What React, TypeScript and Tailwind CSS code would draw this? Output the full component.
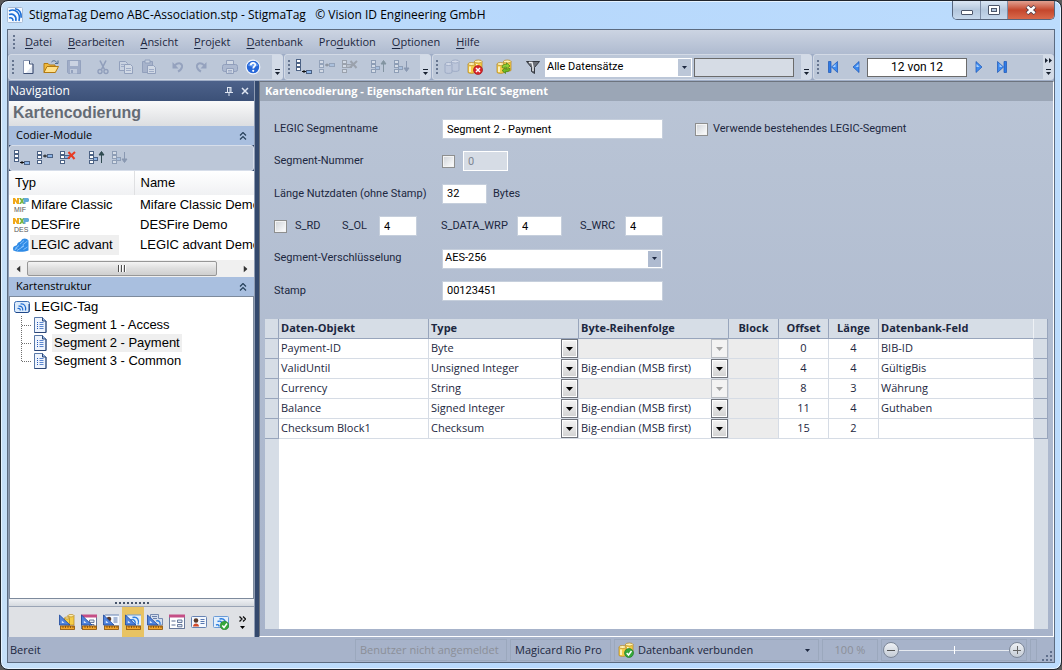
import { useState } from 'react';
import type { ReactNode } from 'react';
import { clsx } from 'clsx';

interface IconProps {
  className?: string;
}

const Icon = ({ className, children }: IconProps & { children: ReactNode }) => (
  <svg viewBox="0 0 16 16" className={clsx('h-4 w-4 shrink-0', className)} aria-hidden="true">
    {children}
  </svg>
);

/* ---------- icons ---------- */

const LogoIcon = () => (
  <Icon>
    <rect x=".5" y=".5" width="15" height="15" rx="1" fill="#f4f9ff" stroke="#a9bcd4" />
    <g fill="none" stroke="#1d6fd6" strokeWidth="1.6">
      <path d="M2 4c6-3 12 2 10 10" />
      <path d="M2 7.500c4-1.500 8 1.500 6.800 6.500" />
      <path d="M2 11c2.500-.8 4.500.8 3.800 3" />
      <path d="M8 1.800c4 .6 6.500 4 6.200 9" />
    </g>
  </Icon>
);

const NewIcon = () => (
  <Icon>
    <path d="M3.500 1.500h6l3.500 3.500v9.500H3.500z" fill="#fff" stroke="#8794b0" />
    <path d="M13 5v9.500H3.500" fill="none" stroke="#3f5075" />
    <path d="M9.500 1.500V5H13" fill="#dfe7f3" stroke="#3f5075" />
    <path d="M12 7v7H6z" fill="#dde4f0" />
  </Icon>
);

const OpenIcon = () => (
  <Icon>
    <path d="M1 13.500V4.500h4l1.500 1.500H12v7.500z" fill="#f0b93c" stroke="#b27a12" />
    <path d="M1 13.500l3-6h11.500l-3.200 6z" fill="#ffe08a" stroke="#b27a12" />
    <path d="M8.500 3c2-2 4-1.500 5 .5M15 1.500v3h-3" fill="none" stroke="#4a6c92" />
  </Icon>
);

const SaveIcon = () => (
  <Icon className="opacity-60">
    <path d="M1.500 1.500h13v13h-12l-1-1z" fill="#8c9bbd" stroke="#7a8aae" />
    <path d="M4 2h8v5H4z" fill="#d5dcea" />
    <path d="M4 10h7v4.500H4z" fill="#c3cde0" />
    <path d="M5 11h2v3H5z" fill="#7a8aae" />
  </Icon>
);

const CutIcon = () => (
  <Icon className="opacity-60">
    <path d="M5 1.500l4.500 9M11 1.500l-4.500 9" stroke="#7383a8" strokeWidth="1.600" />
    <circle cx="5" cy="12.500" r="2" fill="none" stroke="#7383a8" strokeWidth="1.400" />
    <circle cx="11" cy="12.500" r="2" fill="none" stroke="#7383a8" strokeWidth="1.400" />
  </Icon>
);

const CopyIcon = () => (
  <Icon className="opacity-60">
    <path d="M1.500 2.500h6l2 2v7h-8z" fill="#d3dae8" stroke="#7787ab" />
    <path d="M6.500 5.500h6l2 2v7h-8z" fill="#dfe5ef" stroke="#7787ab" />
    <path d="M8 9.500h5M8 11.500h5M3 5.500h3M3 7.500h3" stroke="#8c9bbd" />
  </Icon>
);

const PasteIcon = () => (
  <Icon className="opacity-60">
    <path d="M1.500 2.500h10v11h-10z" fill="#9aa7c4" stroke="#7787ab" />
    <path d="M4 1h5v3H4z" fill="#d3dae8" stroke="#7787ab" />
    <path d="M6.500 6.500h6l2 2v6h-8z" fill="#dfe5ef" stroke="#7787ab" />
    <path d="M8 10.500h5M8 12.500h5" stroke="#8c9bbd" />
  </Icon>
);

const UndoIcon = ({ className }: IconProps) => (
  <Icon className={clsx('opacity-60', className)}>
    <path d="M4.500 6.500c4.500-4 8-2 7.500 1.500-.4 2-2 3.500-4 4.500" fill="none" stroke="#7c8bae" strokeWidth="2" />
    <path d="M2.500 3v6.500h6z" fill="#7c8bae" />
  </Icon>
);

const PrintIcon = () => (
  <Icon className="opacity-60">
    <path d="M4.500 5.500v-4h7v4" fill="#dfe5ef" stroke="#7787ab" />
    <rect x=".5" y="5.500" width="15" height="7" rx="2" fill="#a4b0cb" stroke="#7383a8" />
    <path d="M4.500 9.500h7v5h-7z" fill="#dfe5ef" stroke="#7787ab" />
    <path d="M6 11.500h4M6 13h4" stroke="#8c9bbd" />
  </Icon>
);

const HelpIcon = () => (
  <Icon>
    <circle cx="8" cy="8" r="6.800" fill="#2767d8" stroke="#f1f6ff" strokeWidth="1.200" />
    <path d="M3 6.500c1-4 9-4 10 0-2 1.500-8 1.500-10 0z" fill="#6a9ff0" />
    <path d="M5.800 6.300c0-3.200 4.600-3 4.400-.3-.1 1.500-2 1.600-2 3.400" fill="none" stroke="#fff" strokeWidth="1.700" />
    <circle cx="8.200" cy="11.800" r="1.100" fill="#fff" />
  </Icon>
);

const Rows = () => (
  <g fill="#fff" stroke="#4c6284">
    <rect x=".5" y="1.500" width="4" height="3" />
    <rect x=".5" y="5.500" width="4" height="3" />
    <rect x=".5" y="10.500" width="4" height="3" />
  </g>
);

const AppendIcon = ({ className }: IconProps) => (
  <Icon className={className}>
    <g fill="#fff" stroke="#4c6284">
      <rect x=".5" y=".5" width="4" height="3" />
      <rect x=".5" y="4.500" width="4" height="3" />
      <rect x=".5" y="8.500" width="4" height="3" />
      <rect x="10.500" y="11.500" width="5" height="3" fill="#8cb4e6" />
    </g>
    <path d="M6 12.500h4M8 11v3" stroke="#111" />
  </Icon>
);

const InsertIcon = ({ className }: IconProps) => (
  <Icon className={className}>
    <Rows />
    <rect x="10.500" y="4.500" width="5" height="3" fill="#8cb4e6" stroke="#4c6284" />
    <path d="M6 6h4M8 4.500v3" stroke="#111" />
  </Icon>
);

const RemoveIcon = ({ className }: IconProps) => (
  <Icon className={className}>
    <Rows />
    <rect x="4.500" y="5.500" width="5" height="3" fill="#8cb4e6" stroke="#4c6284" />
    <path d="M8.500 2l6 7M15 2L8 8.500" stroke="#e83c24" strokeWidth="2" />
  </Icon>
);

const MoveIcon = ({ down, className }: IconProps & { down?: boolean }) => (
  <Icon className={className}>
    <Rows />
    <rect x="4.500" y="7.500" width="4" height="3" fill="#8cb4e6" stroke="#4c6284" />
    {down ? (
      <path d="M12.500 2v9M10 9h5l-2.500 3.500z" fill="#3e5478" stroke="#3e5478" />
    ) : (
      <path d="M12.500 13V4M10 5h5l-2.500-3.500z" fill="#2f4a50" stroke="#2f4a50" />
    )}
  </Icon>
);

const Cylinders = () => (
  <g fill="#f4cc48" stroke="#b5851c" strokeWidth=".7">
    <path d="M7.500 2.500v9c1.500 1.200 6 1.200 7.500 0v-9z" />
    <ellipse cx="11.250" cy="2.500" rx="3.750" ry="1.500" fill="#fff3b4" />
    <path d="M1 5v8.500c1.500 1.200 5.500 1.200 7 0V5z" />
    <ellipse cx="4.500" cy="5" rx="3.500" ry="1.500" fill="#fff3b4" />
    <path d="M3 7.500v5.500M9.800 5v6" stroke="#fff9d8" strokeWidth="1.600" />
  </g>
);

const DatabaseIcon = () => (
  <Icon>
    <g fill="#bcc6da" stroke="#97a4c0" strokeWidth=".8">
      <path d="M7.500 2.500v9c1.500 1.200 6 1.200 7.500 0v-9z" />
      <ellipse cx="11.250" cy="2.500" rx="3.750" ry="1.500" fill="#d3dae8" />
      <path d="M1 5v8.500c1.500 1.200 5.500 1.200 7 0V5z" />
      <ellipse cx="4.500" cy="5" rx="3.500" ry="1.500" fill="#d3dae8" />
    </g>
  </Icon>
);

const DatabaseErrorIcon = () => (
  <Icon>
    <Cylinders />
    <circle cx="11" cy="11" r="4.500" fill="#d8262b" stroke="#9c1114" strokeWidth=".6" />
    <path d="M9 9l4 4M13 9l-4 4" stroke="#fff" strokeWidth="1.500" />
  </Icon>
);

const DatabaseRefreshIcon = () => (
  <Icon>
    <Cylinders />
    <path d="M6 8.500C6 6 8 5 10.500 5.500V3.800L14 7l-3.500 3V8.200C9 8 8 8.300 7.500 9z" fill="#8fd136" stroke="#437d10" strokeWidth=".7" />
    <path d="M14 9.500c0 2.500-2 3.500-4.500 3.200v1.800L6 11.500 9.500 8.700v1.600c1.500.2 2.500-.1 3-.8z" fill="#6fba22" stroke="#437d10" strokeWidth=".7" />
  </Icon>
);

const DatabaseOkIcon = () => (
  <Icon>
    <Cylinders />
    <circle cx="11" cy="11" r="4.500" fill="#35a83a" stroke="#1c7522" strokeWidth=".6" />
    <path d="M8.700 11l1.800 2 3-4" fill="none" stroke="#fff" strokeWidth="1.500" />
  </Icon>
);

const FilterIcon = () => (
  <Icon>
    <path d="M1.500 2.500h13L9.500 8.500v6l-3-2v-4z" fill="#6c7078" stroke="#34383f" />
    <path d="M4 3.500h3l1 4.500v4" fill="none" stroke="#eef0f3" strokeWidth="1.400" />
  </Icon>
);

const SkipIcon = ({ bar, className }: IconProps & { bar?: boolean }) => (
  <Icon className={className}>
    {bar && <path d="M3.500 2.500H6v11H3.500z" fill="#2f7be6" stroke="#1b55b5" strokeWidth=".7" />}
    <path
      d={bar ? 'M12.500 2.500v11L6.500 8z' : 'M11 2.500v11L5 8z'}
      fill="#3f8cf0"
      stroke="#1b55b5"
      strokeWidth=".7"
    />
    <path d="M10.500 5v3H7.500z" fill="#a8d0ff" />
  </Icon>
);

const NxpIcon = ({ dark }: { dark?: boolean }) => (
  <svg viewBox="0 0 16 16" className="h-4 w-4 shrink-0" aria-hidden="true">
    <path d="M0 7V1h2l2 3V1h2v6H4L2 4v3z" fill="#f0a818" />
    <path d="M6 1h2l1 1.500L10 1h2l-2 3 2 3h-2L9 5.500 8 7H6l2-3z" fill="#7bb53c" />
    <path d="M10.500 5V1H14c3 0 3 4 0 4h-1.500v2h-2V5z" fill="#61a9d8" />
    <text x="1" y="15" fontSize="7" fontFamily="Liberation Sans, sans-serif" fill="#555">
      {dark ? 'DES' : 'MIF'}
    </text>
  </svg>
);

const LegicIcon = () => (
  <Icon>
    <path
      d="M0 11c1-2.500 3-2 4-3 .5-3 3-3 4-4 1.500-3.500 6-3 7.500-.5v10c-4 1.800-12 1.800-15.200 0z"
      fill="#2f8be6"
    />
    <path
      d="M2 11.500l4-3M4 13.500l7-4.500M7 7l4-3.500M9.500 8l5-4M10.500 12.500l4-2.500M1.500 13l3-2M8 10.500l3-2"
      stroke="#8cc6ff"
      strokeWidth=".9"
    />
  </Icon>
);

const TagIcon = () => (
  <Icon>
    <rect x=".5" y="2.500" width="15" height="11" rx="2" fill="#dcebfb" stroke="#3d6fb4" />
    <path d="M15 5v7c0 1-1 1.500-2 1.500H2" fill="none" stroke="#1f4788" />
    <g fill="none" stroke="#1e6ad0" strokeWidth="1.200">
      <path d="M3.500 9.500c2-.5 3 .5 2.700 2" />
      <path d="M4.500 7.200c3-.7 4.700 1.500 4.200 4.300" />
      <path d="M6.500 5c4-.6 5.700 2.500 5 6.500" />
    </g>
  </Icon>
);

const PageIcon = () => (
  <Icon>
    <path d="M2.500.5h8l3.500 3.500v11.500H2.500z" fill="#eef4fd" stroke="#5878a8" />
    <path d="M14 4v11.500H2.500" fill="none" stroke="#2b4677" />
    <path d="M10.500.5V4H14" fill="#9dbbe6" stroke="#2b4677" />
    <path d="M5 5.500h1M5 7.500h1M5 9.500h1M5 11.500h1" stroke="#2457b8" />
    <path d="M7.500 5.500h4M7.500 7.500h4M7.500 9.500h4M7.500 11.500h4" stroke="#5b86cf" />
  </Icon>
);

const SetSquare = () => (
  <>
    <path d="M.5 1v10h10.500z" fill="#4f83dc" stroke="#1d479c" strokeWidth=".8" />
    <path d="M2.800 6.500v2.500h2.600z" fill="#dce8fa" />
    <rect x="1.500" y="12" width="14" height="3.500" fill="#f3a52a" stroke="#8a5208" strokeWidth=".8" />
    <path d="M4 12v2M6.500 12v2M9 12v2M11.500 12v2M14 12v2" stroke="#6b3e05" strokeWidth=".7" />
  </>
);

const MiniForm = () => (
  <>
    <rect x=".5" y="1.500" width="15" height="13" fill="#fff" stroke="#5a6d92" strokeWidth=".9" />
    <path d="M0 .5h16v3H0z" fill="#c54f86" />
    <path d="M2.500 7h4M2.500 11h4" stroke="#5a6d92" />
    <path d="M8.500 6h4.500v2.500H8.500zM8.500 10.500h4.500v2.300H8.500z" fill="#dfe7f3" stroke="#5a6d92" strokeWidth=".9" />
  </>
);

const MiniCard = () => (
  <>
    <rect x=".5" y="2.500" width="15" height="11" rx="1" fill="#f4f8fe" stroke="#6783b3" />
    <circle cx="5" cy="6.500" r="2.300" fill="#5a3a2a" />
    <path d="M2 12.500c0-4 6-4 6 0z" fill="#d24a2a" />
    <path d="M9.500 5.500h4M9.500 7.500h4M9.500 9.500h4" stroke="#5878b0" />
  </>
);

const MiniTag = () => (
  <>
    <rect x=".5" y="2.500" width="15" height="11" rx="1" fill="#e3effc" stroke="#6b9bd6" />
    <path d="M3 11c2-1 3 0 3 1.500M4.500 7.500c4-1.500 5.500 2 4.500 4.500M6.500 5c5-1.500 7 3 5.500 7" fill="none" stroke="#2a7de0" strokeWidth="1.400" />
  </>
);

const designIcons: { label: string; icon: ReactNode }[] = [
  {
    label: 'Datenbankdesign',
    icon: (
      <Icon>
        <g fill="#f4cc48" stroke="#b5851c" strokeWidth=".7">
          <path d="M9 1.500V11h6V1.500z" />
          <ellipse cx="12" cy="1.700" rx="3" ry="1.200" fill="#fff3b4" />
          <path d="M5.500 4v7h5V4z" />
          <ellipse cx="8" cy="4" rx="2.500" ry="1" fill="#fff3b4" />
        </g>
        <SetSquare />
      </Icon>
    ),
  },
  {
    label: 'Formulardesign',
    icon: (
      <Icon>
        <MiniForm />
        <SetSquare />
      </Icon>
    ),
  },
  {
    label: 'Kartendesign',
    icon: (
      <Icon>
        <g transform="translate(1 -1.500)">
          <MiniCard />
        </g>
        <SetSquare />
      </Icon>
    ),
  },
  {
    label: 'Kartencodierung',
    icon: (
      <Icon>
        <g transform="translate(1 -1.500)">
          <MiniTag />
        </g>
        <SetSquare />
      </Icon>
    ),
  },
  {
    label: 'Druckdesign',
    icon: (
      <Icon>
        <path d="M3.500.5h8v4h4V11h-12z" fill="#d5deee" stroke="#6b80a8" strokeWidth=".9" />
        <path d="M5 2.500h5M6 4.500h4" stroke="#6b80a8" />
        <path d="M9 7c3-1 4.500 1 4 3.500" fill="none" stroke="#2a7de0" strokeWidth="1.300" />
        <SetSquare />
      </Icon>
    ),
  },
  {
    label: 'Formular',
    icon: (
      <Icon>
        <MiniForm />
      </Icon>
    ),
  },
  {
    label: 'Karte',
    icon: (
      <Icon>
        <MiniCard />
      </Icon>
    ),
  },
  {
    label: 'Codieren',
    icon: (
      <Icon>
        <MiniTag />
        <circle cx="11.500" cy="11.500" r="4.300" fill="#35a83a" stroke="#1c7522" strokeWidth=".6" />
        <path d="M9.300 11.500l1.700 2 3-4" fill="none" stroke="#fff" strokeWidth="1.500" />
      </Icon>
    ),
  },
];

const CaretDown = ({ className = 'h-1 w-[7px]' }: IconProps) => (
  <svg viewBox="0 0 7 4" className={className} aria-hidden="true">
    <path d="M0 0h7L3.500 4z" fill="currentColor" />
  </svg>
);

const DoubleChevronUp = () => (
  <svg viewBox="0 0 8 8" className="h-2 w-2" aria-hidden="true">
    <path d="M1 3.500l3-3 3 3M1 7.500l3-3 3 3" fill="none" stroke="#26405a" strokeWidth="1.200" />
  </svg>
);

/* ---------- shared controls ---------- */

const Grip = () => (
  <span className="flex w-[7px] shrink-0 flex-col items-center gap-[2px]">
    {[0, 1, 2, 3].map((dot) => (
      <span key={dot} className="h-[2px] w-[2px] bg-[#66758f]" />
    ))}
  </span>
);

const Separator = () => <span className="w-[6px] shrink-0" />;

interface ToolButtonProps {
  label: string;
  disabled?: boolean;
  children: ReactNode;
}

const ToolButton = ({ label, disabled, children }: ToolButtonProps) => (
  <button
    type="button"
    aria-label={label}
    disabled={disabled}
    className="flex h-[22px] w-[23px] shrink-0 items-center justify-center"
  >
    {children}
  </button>
);

interface StripProps {
  className?: string;
  more?: boolean;
  children: ReactNode;
}

const Strip = ({ className, more, children }: StripProps) => (
  <div
    className={clsx(
      'flex h-[26px] items-center rounded-[3px] border border-[#d3dae6] bg-[#bcc7d8]',
      className
    )}
  >
    <Grip />
    {children}
    <button
      type="button"
      aria-label="Weitere Schaltflächen"
      className="ml-auto flex h-full w-[10px] shrink-0 flex-col items-center justify-end gap-[2px] bg-[#d3dbe7] pb-1 text-[#17202f]"
    >
      {more && (
        <svg viewBox="0 0 7 5" className="mb-1 h-[5px] w-[7px]" aria-hidden="true">
          <path d="M0 0l3 2.500L0 5zM4 0l3 2.500L4 5z" fill="currentColor" />
        </svg>
      )}
      <span className="h-px w-[5px] bg-[#17202f]" />
      <CaretDown className="h-[3px] w-[5px]" />
    </button>
  </div>
);

const fieldClass =
  'h-5 border border-[#c6cfdc] bg-white px-1 text-[11px] leading-4 text-black outline-none';

const checkClass =
  'h-[13px] w-[13px] shrink-0 appearance-none border border-[#8e8f8f] bg-gradient-to-br from-[#cfd3d8] to-white shadow-[inset_0_0_0_1px_#f4f4f4] checked:bg-[#3f6fb5]';

/* ---------- title, menu, toolbars ---------- */

const TitleBar = () => (
  <header className="flex h-7 shrink-0 items-center gap-[6px] text-xs text-black">
    <LogoIcon />
    <h1 className="whitespace-pre">StigmaTag Demo ABC-Association.stp - StigmaTag   © Vision ID Engineering GmbH</h1>
    <div className="ml-auto flex h-[19px] self-start overflow-hidden rounded-b-[5px] border border-t-0 border-[#56657c]">
      <button
        type="button"
        aria-label="Minimieren"
        className="flex w-7 items-center justify-center border-r border-[#7d8da6] bg-gradient-to-b from-[#dbe7f4] via-[#b4c7dd] to-[#c6d8ec]"
      >
        <span className="mt-1 h-[5px] w-3 rounded-[1px] border border-[#4c566a] bg-white" />
      </button>
      <button
        type="button"
        aria-label="Maximieren"
        className="flex w-[27px] items-center justify-center border-r border-[#7d8da6] bg-gradient-to-b from-[#dbe7f4] via-[#b4c7dd] to-[#c6d8ec]"
      >
        <span className="flex h-[10px] w-3 items-center justify-center rounded-[1px] border border-[#4c566a] bg-white">
          <span className="h-1 w-[6px] border border-[#4c566a] bg-[#b4c7dd]" />
        </span>
      </button>
      <button
        type="button"
        aria-label="Schließen"
        className="flex w-[46px] items-center justify-center bg-gradient-to-b from-[#e0a091] via-[#c4462c] to-[#d9694b]"
      >
        <svg viewBox="0 0 12 10" className="h-[10px] w-3" aria-hidden="true">
          <path d="M2 1.500l8 7M10 1.500l-8 7" stroke="#4c3a46" strokeWidth="4.200" />
          <path d="M2.300 1.800l7.400 6.400M9.700 1.800L2.300 8.200" stroke="#fff" strokeWidth="2.500" />
        </svg>
      </button>
    </div>
  </header>
);

const menuItems = [
  ['', 'D', 'atei'],
  ['', 'B', 'earbeiten'],
  ['', 'A', 'nsicht'],
  ['', 'P', 'rojekt'],
  ['', 'D', 'atenbank'],
  ['Pro', 'd', 'uktion'],
  ['', 'O', 'ptionen'],
  ['', 'H', 'ilfe'],
];

const MenuBar = () => (
  <nav className="flex h-6 shrink-0 items-center bg-gradient-to-b from-[#ccd4e2] to-[#afbbd0] pl-[2px]">
    <Grip />
    {menuItems.map(([before, key, after]) => (
      <button key={before + key + after} type="button" className="px-2 text-[11px]">
        {before}
        <u className="underline-offset-2">{key}</u>
        {after}
      </button>
    ))}
  </nav>
);

const Toolbars = () => (
  <div className="flex h-[27px] shrink-0 gap-px bg-[#9fadc6]">
    <Strip className="w-[275px]">
      <ToolButton label="Neu"><NewIcon /></ToolButton>
      <ToolButton label="Öffnen"><OpenIcon /></ToolButton>
      <ToolButton label="Speichern" disabled><SaveIcon /></ToolButton>
      <Separator />
      <ToolButton label="Ausschneiden" disabled><CutIcon /></ToolButton>
      <ToolButton label="Kopieren" disabled><CopyIcon /></ToolButton>
      <ToolButton label="Einfügen" disabled><PasteIcon /></ToolButton>
      <Separator />
      <ToolButton label="Rückgängig" disabled><UndoIcon /></ToolButton>
      <ToolButton label="Wiederholen" disabled><UndoIcon className="-scale-x-100" /></ToolButton>
      <Separator />
      <ToolButton label="Drucken" disabled><PrintIcon /></ToolButton>
      <ToolButton label="Hilfe"><HelpIcon /></ToolButton>
    </Strip>
    <Strip className="w-[147px]">
      <ToolButton label="Anhängen"><AppendIcon /></ToolButton>
      <ToolButton label="Einfügen" disabled><InsertIcon className="opacity-35" /></ToolButton>
      <ToolButton label="Entfernen" disabled><RemoveIcon className="opacity-35 grayscale" /></ToolButton>
      <Separator />
      <ToolButton label="Nach oben" disabled><MoveIcon className="opacity-40" /></ToolButton>
      <ToolButton label="Nach unten" disabled><MoveIcon down className="opacity-40" /></ToolButton>
    </Strip>
    <Strip className="w-[380px]">
      <ToolButton label="Datenbank" disabled><DatabaseIcon /></ToolButton>
      <ToolButton label="Datenbank trennen"><DatabaseErrorIcon /></ToolButton>
      <Separator />
      <ToolButton label="Aktualisieren"><DatabaseRefreshIcon /></ToolButton>
      <Separator />
      <ToolButton label="Filter"><FilterIcon /></ToolButton>
      <div className="relative mr-[2px] ml-px h-[19px] w-[147px] shrink-0">
        <select
          aria-label="Datensätze"
          className="block h-full w-full appearance-none bg-white pl-[2px] font-[Roboto,sans-serif] text-[11px] text-black outline-none"
        >
          <option>Alle Datensätze</option>
        </select>
        <span className="pointer-events-none absolute inset-y-px right-px flex w-[13px] items-center justify-center bg-[#bcc7d8]">
          <CaretDown className="h-[3px] w-[5px]" />
        </span>
      </div>
      <input
        aria-label="Filterwert"
        disabled
        className="h-[19px] w-[100px] border border-[#6b6b6b] bg-[#d6dce5]"
      />
    </Strip>
    <Strip className="flex-1" more>
      <ToolButton label="Erster"><SkipIcon bar /></ToolButton>
      <ToolButton label="Vorheriger"><SkipIcon /></ToolButton>
      <input
        aria-label="Datensatz"
        defaultValue="12 von 12"
        className="h-[19px] w-[100px] border border-[#6b6b6b] bg-white text-center font-[Roboto,sans-serif] text-xs text-black outline-none"
      />
      <ToolButton label="Nächster"><SkipIcon className="-scale-x-100" /></ToolButton>
      <ToolButton label="Letzter"><SkipIcon bar className="-scale-x-100" /></ToolButton>
    </Strip>
  </div>
);

/* ---------- navigation ---------- */

const modules = [
  { type: 'Mifare Classic', name: 'Mifare Classic Demo', icon: <NxpIcon /> },
  { type: 'DESFire', name: 'DESFire Demo', icon: <NxpIcon dark /> },
  { type: 'LEGIC advant', name: 'LEGIC advant Demo', icon: <LegicIcon /> },
];

const segments = ['Segment 1 - Access', 'Segment 2 - Payment', 'Segment 3 - Common'];

const SectionHeader = ({ title }: { title: string }) => (
  <button
    type="button"
    className="flex h-[19px] w-full shrink-0 items-center justify-between bg-[#a9bfdf] px-[7px] text-[11px] text-black"
  >
    {title}
    <DoubleChevronUp />
  </button>
);

const ModuleList = () => (
  <div className="h-[89px] shrink-0 overflow-hidden bg-white">
    <table className="w-[300px] table-fixed border-collapse text-left font-['Liberation_Sans',sans-serif] text-[13px] leading-5 text-black">
      <thead>
        <tr className="h-6 bg-gradient-to-b from-white to-[#f0f1f3]">
          <th className="w-[125px] border-r border-[#dfe0e2] pl-[6px] font-normal">Typ</th>
          <th className="pl-[6px] font-normal">Name</th>
        </tr>
      </thead>
      <tbody>
        {modules.map((module, index) => (
          <tr key={module.type} className="h-5">
            <td className="p-0 pl-1">
              <span className="flex items-center gap-px">
                {module.icon}
                <span className={clsx('pr-[6px] pl-px', index === 2 && 'bg-[#efefef]')}>
                  {module.type}
                </span>
              </span>
            </td>
            <td className="p-0 pl-[6px] whitespace-nowrap">{module.name}</td>
          </tr>
        ))}
      </tbody>
    </table>
  </div>
);

const ScrollBar = () => (
  <div className="flex h-[17px] shrink-0 items-center bg-[#f0f0f0] text-[#333]">
    <button type="button" aria-label="Nach links" className="flex w-[18px] justify-center">
      <CaretDown className="h-1 w-[7px] rotate-90" />
    </button>
    <div className="flex flex-1">
      <div className="flex h-[15px] w-[91%] items-center justify-center gap-px rounded-[2px] border border-[#979797] bg-gradient-to-b from-[#f4f4f4] via-[#dedede] to-[#cfcfcf]">
        {[0, 1, 2].map((line) => (
          <span key={line} className="h-[7px] w-[2px] border-r border-white bg-[#4f4f4f]" />
        ))}
      </div>
    </div>
    <button type="button" aria-label="Nach rechts" className="flex w-[18px] justify-center">
      <CaretDown className="h-1 w-[7px] -rotate-90" />
    </button>
  </div>
);

const SegmentTree = () => {
  const [selected, setSelected] = useState(segments[1]);

  return (
    <div className="min-h-0 flex-1 border border-[#7d8a9c] bg-white pt-px pl-1 font-['Liberation_Sans',sans-serif] text-[13px] leading-[18px] text-black">
      <p className="flex items-center gap-1">
        <TagIcon />
        LEGIC-Tag
      </p>
      <ul className="pl-[7px]">
        {segments.map((segment, index) => (
          <li key={segment} className="flex items-center">
            <svg viewBox="0 0 11 18" className="h-[18px] w-[11px]" aria-hidden="true">
              <path
                d={index === segments.length - 1 ? 'M.5 0v9.500H11' : 'M.5 0v18M1 9.500h10'}
                fill="none"
                stroke="#6f6f6f"
                strokeDasharray="1 1"
              />
            </svg>
            <PageIcon />
            <button
              type="button"
              onClick={() => setSelected(segment)}
              className={clsx('ml-1 px-[2px]', segment === selected && 'bg-[#efefef]')}
            >
              {segment}
            </button>
          </li>
        ))}
      </ul>
    </div>
  );
};

const Navigation = () => (
  <aside className="flex w-[247px] shrink-0 flex-col border-x border-[#8f9cb3]">
    <div className="flex h-5 shrink-0 items-center bg-gradient-to-b from-[#4d628b] to-[#3c5178] px-px text-xs text-white">
      Navigation
      <button type="button" aria-label="Anheften" className="ml-auto">
        <svg viewBox="0 0 8 9" className="h-[9px] w-2" aria-hidden="true">
          <path d="M2.500 0v5M5 0v5M6 0v5M2 .5h4M0 5.500h8M4 6v3" stroke="#dfe6f2" />
        </svg>
      </button>
      <button type="button" aria-label="Navigation schließen" className="mr-1 ml-2">
        <svg viewBox="0 0 8 8" className="h-2 w-2" aria-hidden="true">
          <path d="M1 1l6 6M7 1L1 7" stroke="#dfe6f2" strokeWidth="1.500" />
        </svg>
      </button>
    </div>
    <h2 className="h-[25px] shrink-0 bg-gradient-to-b from-[#fafafa] to-[#dcdee1] pl-1 font-['Liberation_Sans',sans-serif] text-base leading-6 font-bold text-[#656b75]">
      Kartencodierung
    </h2>
    <SectionHeader title="Codier-Module" />
    <div className="flex h-[26px] shrink-0 items-center rounded-[3px] border border-[#d7deea] bg-[#bcc7d8]">
      <ToolButton label="Modul anhängen"><AppendIcon /></ToolButton>
      <ToolButton label="Modul einfügen"><InsertIcon /></ToolButton>
      <ToolButton label="Modul entfernen"><RemoveIcon /></ToolButton>
      <Separator />
      <ToolButton label="Modul nach oben"><MoveIcon /></ToolButton>
      <ToolButton label="Modul nach unten" disabled><MoveIcon down className="opacity-40" /></ToolButton>
    </div>
    <ModuleList />
    <ScrollBar />
    <SectionHeader title="Kartenstruktur" />
    <SegmentTree />
    <div className="flex h-[7px] shrink-0 items-center justify-center gap-[2px] bg-gradient-to-b from-[#f0f2f5] to-[#d5d9df]">
      {[0, 1, 2, 3, 4, 5, 6, 7, 8].map((dot) => (
        <span key={dot} className="h-[2px] w-[2px] bg-[#46546b]" />
      ))}
    </div>
    <div className="flex h-[31px] shrink-0 items-center justify-end border-t border-[#9aa4b5] bg-[#dfe1e5] pr-[2px]">
      {designIcons.map(({ label, icon }) => (
        <button
          key={label}
          type="button"
          aria-label={label}
          className={clsx(
            'flex h-[30px] w-[22px] items-center justify-center',
            label === 'Kartencodierung' && 'bg-[#e8c363]'
          )}
        >
          {icon}
        </button>
      ))}
      <button type="button" aria-label="Mehr" className="flex w-5 flex-col items-center gap-1">
        <svg viewBox="0 0 7 6" className="h-[6px] w-[7px]" aria-hidden="true">
          <path d="M.5 .5L3 3 .5 5.500M4 .5L6.500 3 4 5.500" fill="none" stroke="#111" strokeWidth="1.300" />
        </svg>
        <CaretDown className="h-[3px] w-[5px] text-black" />
      </button>
    </div>
  </aside>
);

/* ---------- segment form ---------- */

const SegmentForm = () => (
  <form className="flex h-[182px] shrink-0 flex-col justify-between font-[Roboto,sans-serif] text-[11px]">
    <div className="flex h-5 items-center">
      <label htmlFor="segment-name" className="w-[168px] shrink-0">LEGIC Segmentname</label>
      <input id="segment-name" defaultValue="Segment 2 - Payment" className={clsx(fieldClass, 'w-[221px]')} />
      <label className="ml-8 flex items-center gap-[5px]">
        <input type="checkbox" className={checkClass} />
        Verwende bestehendes LEGIC-Segment
      </label>
    </div>
    <div className="flex h-5 items-center">
      <label htmlFor="segment-number" className="w-[168px] shrink-0">Segment-Nummer</label>
      <input type="checkbox" aria-label="Segment-Nummer verwenden" className={checkClass} />
      <input
        id="segment-number"
        defaultValue="0"
        disabled
        className="ml-2 h-5 w-[45px] border border-white bg-[#d6dce5] px-1 text-[11px] text-[#7d8592]"
      />
    </div>
    <div className="flex h-5 items-center">
      <label htmlFor="data-length" className="w-[168px] shrink-0">Länge Nutzdaten (ohne Stamp)</label>
      <input id="data-length" defaultValue="32" className={clsx(fieldClass, 'w-[45px]')} />
      <span className="ml-[6px]">Bytes</span>
    </div>
    <div className="flex h-5 items-center">
      <label className="flex w-[68px] items-center gap-2">
        <input type="checkbox" className={checkClass} />
        S_RD
      </label>
      <label htmlFor="s-ol" className="w-[37px]">S_OL</label>
      <input id="s-ol" defaultValue="4" className={clsx(fieldClass, 'w-[38px]')} />
      <label htmlFor="s-data-wrp" className="w-[100px] pl-6">S_DATA_WRP</label>
      <input id="s-data-wrp" defaultValue="4" className={clsx(fieldClass, 'w-[45px]')} />
      <label htmlFor="s-wrc" className="w-[63px] pl-[18px]">S_WRC</label>
      <input id="s-wrc" defaultValue="4" className={clsx(fieldClass, 'w-[38px]')} />
    </div>
    <div className="flex h-5 items-center">
      <label htmlFor="encryption" className="w-[168px] shrink-0">Segment-Verschlüsselung</label>
      <div className="relative w-[221px]">
        <select
          id="encryption"
          className="block h-5 w-full appearance-none border border-[#c6cfdc] bg-white pl-[2px] text-[11px] text-black outline-none"
        >
          <option>AES-256</option>
          <option>DES</option>
        </select>
        <span className="pointer-events-none absolute inset-y-[2px] right-[2px] flex w-[13px] items-center justify-center bg-[#afbbd0]">
          <CaretDown className="h-[3px] w-[5px]" />
        </span>
      </div>
    </div>
    <div className="flex h-5 items-center">
      <label htmlFor="stamp" className="w-[168px] shrink-0">Stamp</label>
      <input id="stamp" defaultValue="00123451" className={clsx(fieldClass, 'w-[221px]')} />
    </div>
  </form>
);

/* ---------- data objects ---------- */

interface DataObject {
  name: string;
  type: string;
  order: string;
  offset: number;
  length: number;
  field: string;
}

const BIG_ENDIAN = 'Big-endian (MSB first)';

const dataObjects: DataObject[] = [
  { name: 'Payment-ID', type: 'Byte', order: '', offset: 0, length: 4, field: 'BIB-ID' },
  { name: 'ValidUntil', type: 'Unsigned Integer', order: BIG_ENDIAN, offset: 4, length: 4, field: 'GültigBis' },
  { name: 'Currency', type: 'String', order: '', offset: 8, length: 3, field: 'Währung' },
  { name: 'Balance', type: 'Signed Integer', order: BIG_ENDIAN, offset: 11, length: 4, field: 'Guthaben' },
  { name: 'Checksum Block1', type: 'Checksum', order: BIG_ENDIAN, offset: 15, length: 2, field: '' },
];

const CellSelect = ({ label, value }: { label: string; value: string }) => (
  <div className="relative h-[19px]">
    <select
      aria-label={label}
      disabled={!value}
      className="block h-full w-full appearance-none bg-transparent pl-[2px] text-[11px] outline-none"
    >
      <option>{value}</option>
    </select>
    <span
      className={clsx(
        'pointer-events-none absolute inset-y-0 right-0 flex w-[17px] items-center justify-center border',
        value
          ? 'border-[#70747c] bg-gradient-to-b from-[#f4f4f4] to-[#d2d2d2] text-black shadow-[inset_0_0_0_1px_#fff]'
          : 'border-[#b9bdc3] bg-[#f3f3f3] text-[#a3a3a3]'
      )}
    >
      <CaretDown />
    </span>
  </div>
);

const headClass = 'border-r border-b border-[#98a5bc] px-[2px] font-bold';
const cellClass = 'border-r border-b border-[#d6dce5] p-0';
const gutterClass = 'border-r border-b border-[#98a5bc] bg-[#d6dde6] p-0';

const DataTable = () => (
  <div className="flex min-h-0 flex-1 flex-col bg-white">
    <table className="w-full table-fixed border-separate border-spacing-0 text-left text-[11px]">
      <thead>
        <tr className="h-5 bg-[#d6dde6]">
          <th className={clsx(headClass, 'w-[14px]')} />
          <th className={clsx(headClass, 'w-[150px]')}>Daten-Objekt</th>
          <th className={clsx(headClass, 'w-[150px]')}>Type</th>
          <th className={clsx(headClass, 'w-[150px]')}>Byte-Reihenfolge</th>
          <th className={clsx(headClass, 'w-[50px] text-center')}>Block</th>
          <th className={clsx(headClass, 'w-[50px] text-center')}>Offset</th>
          <th className={clsx(headClass, 'w-[50px] text-center')}>Länge</th>
          <th className="border-r border-b border-r-[#eef1f5] border-b-[#98a5bc] px-[2px] font-bold">
            Datenbank-Feld
          </th>
          <th className={clsx(headClass, 'w-[14px]')} />
        </tr>
      </thead>
      <tbody>
        {dataObjects.map((row) => (
          <tr key={row.name} className="h-5">
            <td className={gutterClass} />
            <td className={cellClass}>
              <span className="px-[2px]">{row.name}</span>
            </td>
            <td className={cellClass}>
              <CellSelect label={`Type ${row.name}`} value={row.type} />
            </td>
            <td className={clsx(cellClass, !row.order && 'bg-[#ececec]')}>
              <CellSelect label={`Byte-Reihenfolge ${row.name}`} value={row.order} />
            </td>
            <td className={clsx(cellClass, 'bg-[#ececec]')} />
            <td className={clsx(cellClass, 'text-center')}>{row.offset}</td>
            <td className={clsx(cellClass, 'text-center')}>{row.length}</td>
            <td className={cellClass}>
              <span className="px-[2px]">{row.field}</span>
            </td>
            <td className={gutterClass} />
          </tr>
        ))}
      </tbody>
    </table>
    <div className="flex flex-1 justify-between">
      <div className="w-[14px] bg-[#d6dde6]" />
      <div className="w-[14px] bg-[#d6dde6]" />
    </div>
  </div>
);

const SegmentPanel = () => (
  <main className="flex min-w-0 flex-1 flex-col border border-t-[#6d747f] border-r-white border-b-white border-l-[#6d747f] bg-gradient-to-b from-[#bac5d6] to-[#a7b3ca]">
    <h2 className="h-[19px] shrink-0 bg-[#9ba6b6] pl-[5px] text-[11px] leading-[18px] font-bold text-white">
      Kartencodierung - Eigenschaften für LEGIC Segment
    </h2>
    <div className="px-[14px] py-[18px]">
      <SegmentForm />
    </div>
    <div className="flex min-h-0 flex-1 flex-col pr-[5px] pb-[7px] pl-[5px]">
      <DataTable />
    </div>
  </main>
);

/* ---------- status bar ---------- */

const statusCell = 'flex h-[22px] items-center border border-[#9ba8bd]';

const StatusBar = () => (
  <footer className="flex h-[25px] shrink-0 items-center gap-[3px] bg-[#a7b3ca] pt-px pl-[2px] text-[11px]">
    <span className="mr-auto">Bereit</span>
    <span className={clsx(statusCell, 'w-[152px] pl-1 whitespace-nowrap text-[#8b8f98]')}>
      Benutzer nicht angemeldet
    </span>
    <span className={clsx(statusCell, 'w-[101px] pl-1 whitespace-nowrap')}>Magicard Rio Pro</span>
    <button type="button" className={clsx(statusCell, 'w-[205px] gap-1 pr-2 pl-[3px]')}>
      <DatabaseOkIcon />
      Datenbank verbunden
      <CaretDown className="ml-auto h-[3px] w-[5px]" />
    </button>
    <span className={clsx(statusCell, 'w-[56px] justify-center text-[#8b8f98]')}>100 %</span>
    <div className={clsx(statusCell, 'w-[146px] px-px')}>
      <button
        type="button"
        aria-label="Verkleinern"
        className="flex h-4 w-4 shrink-0 items-center justify-center rounded-full border border-[#7d8798] bg-gradient-to-b from-[#eef1f5] to-[#c5ccd6]"
      >
        <span className="h-px w-2 bg-[#555]" />
      </button>
      <input
        type="range"
        aria-label="Zoom"
        className="h-3 min-w-0 flex-1 appearance-none bg-transparent bg-[linear-gradient(#e6eaf0,#e6eaf0)] bg-[length:100%_1px] bg-center bg-no-repeat [&::-webkit-slider-thumb]:h-2 [&::-webkit-slider-thumb]:w-px [&::-webkit-slider-thumb]:appearance-none [&::-webkit-slider-thumb]:bg-white"
      />
      <button
        type="button"
        aria-label="Vergrößern"
        className="flex h-4 w-4 shrink-0 items-center justify-center rounded-full border border-[#7d8798] bg-gradient-to-b from-[#eef1f5] to-[#c5ccd6]"
      >
        <svg viewBox="0 0 8 8" className="h-2 w-2" aria-hidden="true">
          <path d="M0 4.500h8M4.500 0v8" stroke="#666" />
        </svg>
      </button>
    </div>
    <span className={clsx(statusCell, 'w-[7px]')} />
    <svg viewBox="0 0 11 11" className="mr-px ml-[2px] h-[11px] w-[11px] self-end" aria-hidden="true">
      <path d="M8 0h2v2H8zM4 4h2v2H4zM8 4h2v2H8zM0 8h2v2H0zM4 8h2v2H4zM8 8h2v2H8z" fill="#5f6f8c" />
    </svg>
  </footer>
);

const App = () => (
  <div className="h-screen min-h-[560px] bg-[#5a5a5a] font-['Open_Sans',sans-serif] text-[#1c2740]">
    <div className="flex h-full flex-col rounded-lg border border-[#20252d] bg-gradient-to-r from-[#c5dff8] via-[#b7d8fc] to-[#bcdcfd] px-[6px] pb-[6px] shadow-[inset_0_0_0_1px_#e6f3ff]">
      <TitleBar />
      <div className="flex min-h-0 flex-1 flex-col border border-[#5c6b80]">
        <MenuBar />
        <Toolbars />
        <div className="flex min-h-0 flex-1 bg-[#34496d]">
          <Navigation />
          <div className="w-1 shrink-0" />
          <SegmentPanel />
        </div>
        <StatusBar />
      </div>
    </div>
  </div>
);

export default App;
